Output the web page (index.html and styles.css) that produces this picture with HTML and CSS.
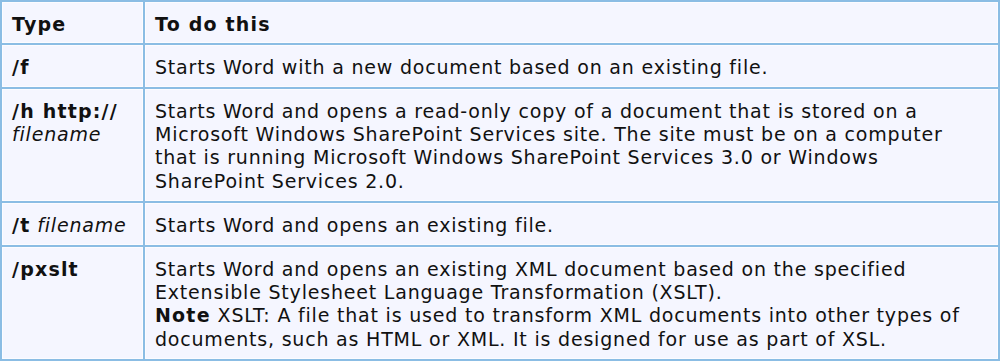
FILE: index.html
```html
<!DOCTYPE html>
<html lang="en">
<head>
  <meta charset="UTF-8">
  <title>Word command-line switches</title>
  <link rel="stylesheet" href="styles.css">
</head>
<body>
  <table class="switches">
    <thead>
      <tr>
        <th class="type">Type</th>
        <th>To do this</th>
      </tr>
    </thead>
    <tbody>
      <tr>
        <td class="type"><b>/f</b></td>
        <td>Starts Word with a new document based on an existing file.</td>
      </tr>
      <tr>
        <td class="type"><b>/h http://</b><br><i>filename</i></td>
        <td>Starts Word and opens a read-only copy of a document that is stored on a Microsoft Windows SharePoint Services site. The site must be on a computer that is running Microsoft Windows SharePoint Services 3.0 or Windows SharePoint Services 2.0.</td>
      </tr>
      <tr>
        <td class="type"><b>/t</b> <i>filename</i></td>
        <td>Starts Word and opens an existing file.</td>
      </tr>
      <tr>
        <td class="type"><b>/pxslt</b></td>
        <td>Starts Word and opens an existing XML document based on the specified Extensible Stylesheet Language Transformation (XSLT).<br><b>Note</b> XSLT: A file that is used to transform XML documents into other types of documents, such as HTML or XML. It is designed for use as part of XSL.</td>
      </tr>
    </tbody>
  </table>
</body>
</html>
```

FILE: styles.css
```css
body {
  margin: 0;
  background-color: #fff;
  font-family: Verdana, "DejaVu Sans", sans-serif;
  font-size: 19px;
  letter-spacing: 0.8px;
  color: #111;
}

.switches {
  width: 1000px;
  border-collapse: separate;
  border-spacing: 2px;
  background-color: #8bbde4;
}

.switches th,
.switches td {
  padding: 9.67px 9px 7px;
  line-height: 23.33px;
  text-align: left;
  vertical-align: top;
  background-color: #f5f6ff;
  border: 1px solid #fcfcff;
}

.switches th {
  padding-bottom: 6px;
  font-weight: bold;
}

.switches th,
.switches b {
  letter-spacing: 1.2px;
}

.switches .type {
  width: 121px;
}
```
